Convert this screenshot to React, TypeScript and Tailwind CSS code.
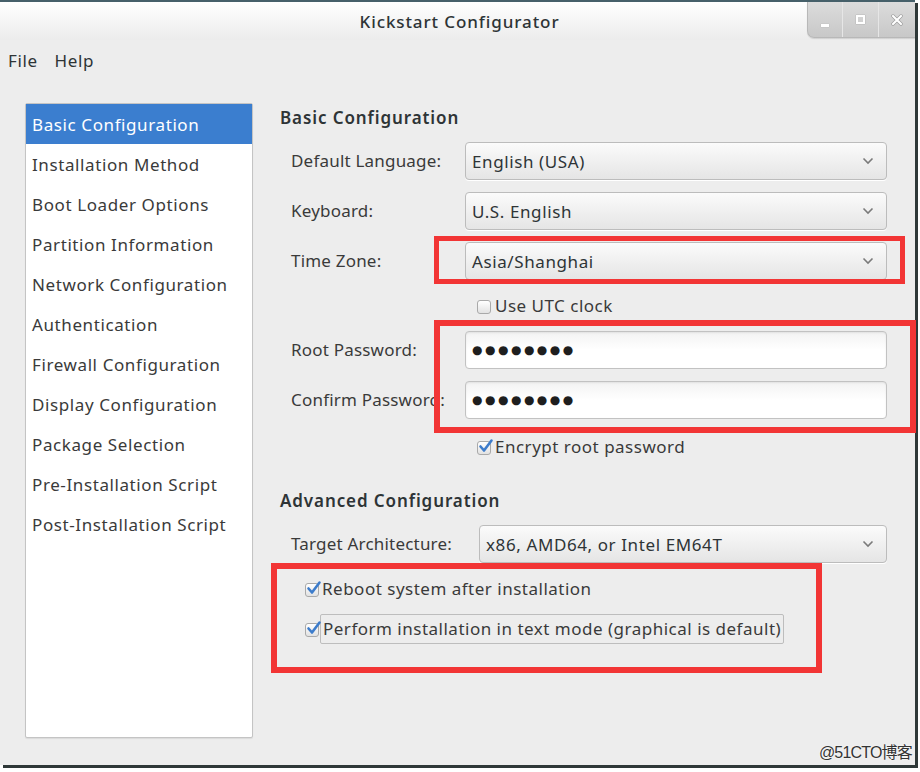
import React from "react";

const FONT = "font-['Noto_Sans','DejaVu_Sans',sans-serif]";

function Chevron() {
  return (
    <svg width="12" height="8" viewBox="0 0 12 8" className="shrink-0">
      <polyline points="1.5,1.5 6,6 10.5,1.5" fill="none" stroke="#7a7a7a" strokeWidth="1.6" />
    </svg>
  );
}

function Combo({ text, cls }: { text: string; cls: string }) {
  return (
    <div
      className={`h-[38px] ${cls} rounded-[4px] border border-[#bcbcbc] bg-gradient-to-b from-[#fbfbfb] to-[#e5e5e5] flex items-center justify-between pl-[6px] pr-[12px] shadow-[0_1px_0_#ffffff]`}
    >
      <span className="text-[17px] text-[#2e3436] leading-none tracking-[0.6px]">{text}</span>
      <Chevron />
    </div>
  );
}

function Entry() {
  return (
    <div className="h-[38px] w-[422px] rounded-[4px] border border-[#c2c2c2] bg-gradient-to-b from-[#f3f3f3] via-[#ffffff] to-[#ffffff] flex items-center pl-[6px] shadow-[inset_0_1px_2px_rgba(0,0,0,0.08)]">
      <span className="font-['DejaVu_Sans',sans-serif] text-[12px] tracking-[2.5px] text-[#1e1e1e] leading-none">
        ●●●●●●●●
      </span>
    </div>
  );
}

function Check({ checked }: { checked: boolean }) {
  return (
    <div className="relative w-[15px] h-[15px] shrink-0">
      <div className="absolute left-0 top-[1px] w-[14px] h-[14px] rounded-[3px] border border-[#a9a9a9] bg-gradient-to-b from-[#ffffff] to-[#e2e2e2]" />
      {checked && (
        <svg width="16" height="16" viewBox="0 0 16 16" className="absolute left-[1px] -top-[2px]">
          <path d="M2.5 8.5 L6 12.5 L13.5 2.5" fill="none" stroke="#3d7ccb" strokeWidth="2.6" strokeLinecap="round" strokeLinejoin="round" />
        </svg>
      )}
    </div>
  );
}

const sideItems = [
  "Basic Configuration",
  "Installation Method",
  "Boot Loader Options",
  "Partition Information",
  "Network Configuration",
  "Authentication",
  "Firewall Configuration",
  "Display Configuration",
  "Package Selection",
  "Pre-Installation Script",
  "Post-Installation Script",
];

export default function App() {
  return (
    <div className={`relative w-[920px] h-[772px] bg-white overflow-hidden ${FONT}`}>
      <div className="w-[915px] h-[765px] bg-[#ededed] border-t-2 border-[#46606a] shadow-[3px_3px_0_#2f3838] flex flex-col">
        {/* Title bar */}
        <div className="h-[38px] grid grid-cols-[1fr_auto_1fr] bg-gradient-to-b from-[#ffffff] to-[#ececec]">
          <div />
          <div className="flex items-center justify-center pl-[4px]">
            <span className="text-[17px] font-medium tracking-[0.9px] text-[#2e3436] leading-none">Kickstart Configurator</span>
          </div>
          <div className="flex justify-end">
            <div className="flex h-[36px] rounded-bl-[7px] bg-gradient-to-b from-[#dcdcdc] to-[#c8c8c8] border-l border-b border-[#b8b8b8] shadow-[0_1px_1px_rgba(0,0,0,0.12)]">
              <div className="w-[35px] flex items-end justify-center pb-[10px] border-r border-[#e6e6e6]">
                <div className="w-[8px] h-[3px] bg-white shadow-[0_0_1px_#8a8a8a]" />
              </div>
              <div className="w-[36px] flex items-center justify-center border-r border-[#e6e6e6]">
                <div className="w-[9px] h-[9px] border-[2px] border-white shadow-[0_0_1px_#8a8a8a]" />
              </div>
              <div className="w-[36px] flex items-center justify-center">
                <svg width="12" height="12" viewBox="0 0 12 12">
                  <path d="M2 2 L10 10 M10 2 L2 10" stroke="#9a9a9a" strokeWidth="3.4" strokeLinecap="round" />
                  <path d="M2 2 L10 10 M10 2 L2 10" stroke="#ffffff" strokeWidth="2.2" strokeLinecap="round" />
                </svg>
              </div>
            </div>
          </div>
        </div>

        {/* Menu bar */}
        <div className="h-[42px] flex items-center gap-[17px] px-[8px] text-[17px] tracking-[0.6px] text-[#2e3436]">
          <span>File</span>
          <span>Help</span>
        </div>

        {/* Content */}
        <div className="flex pl-[25px] pt-[21px]">
          {/* Sidebar */}
          <div className="w-[228px] h-[635px] bg-white border border-[#c4c4c4] rounded-[2px] shadow-[0_1px_1px_rgba(0,0,0,0.08)] flex flex-col">
            {sideItems.map((s, i) => (
              <div
                key={s}
                className={
                  i === 0
                    ? "h-[40px] flex items-center px-[6px] pt-[1px] bg-[#3b7ecf] text-white text-[17px] tracking-[0.6px]"
                    : "h-[40px] flex items-center px-[6px] pt-[1px] text-[#3a3a3a] text-[17px] tracking-[0.6px]"
                }
              >
                {s}
              </div>
            ))}
          </div>

          {/* Right panel */}
          <div className="ml-[27px] w-[620px] flex flex-col text-[17px] tracking-[0.5px] text-[#3a3a3a]">
            <div className="h-[30px] flex items-center font-semibold tracking-[0.9px] text-[#2e3436]">Basic Configuration</div>

            <div className="mt-[9px] flex flex-col gap-[12px]">
              <div className="flex items-center">
                <div className="w-[185px] pl-[11px] tracking-[0.2px]">Default Language:</div>
                <Combo text="English (USA)" cls="w-[422px]" />
              </div>
              <div className="flex items-center">
                <div className="w-[185px] pl-[11px] tracking-[0.2px]">Keyboard:</div>
                <Combo text="U.S. English" cls="w-[422px]" />
              </div>
              <div className="flex items-center">
                <div className="w-[185px] pl-[11px] tracking-[0.2px]">Time Zone:</div>
                <Combo text="Asia/Shanghai" cls="w-[422px]" />
              </div>
            </div>

            <div className="mt-[14px] h-[24px] flex items-center gap-[3px] pl-[197px]">
              <Check checked={false} />
              <span>Use UTC clock</span>
            </div>

            <div className="mt-[13px] flex flex-col gap-[12px]">
              <div className="flex items-center">
                <div className="w-[185px] pl-[11px] tracking-[0.2px]">Root Password:</div>
                <Entry />
              </div>
              <div className="flex items-center">
                <div className="w-[185px] pl-[11px] tracking-[0.2px] whitespace-nowrap">Confirm Password:</div>
                <Entry />
              </div>
            </div>

            <div className="mt-[16px] h-[24px] flex items-center gap-[3px] pl-[197px]">
              <Check checked={true} />
              <span>Encrypt root password</span>
            </div>

            <div className="mt-[27px] h-[30px] flex items-center font-semibold tracking-[0.9px] text-[#2e3436]">Advanced Configuration</div>

            <div className="mt-[9px] flex items-center">
              <div className="w-[199px] pl-[11px] tracking-[0.2px]">Target Architecture:</div>
              <Combo text="x86, AMD64, or Intel EM64T" cls="w-[408px]" />
            </div>

            <div className="mt-[14px] h-[24px] flex items-center gap-[2px] pl-[25px]">
              <Check checked={true} />
              <span>Reboot system after installation</span>
            </div>

            <div className="mt-[13px] h-[30px] flex items-center gap-[0px] pl-[25px]">
              <Check checked={true} />
              <span className="h-[30px] flex items-center px-[2px] border border-[#bdbdbd] rounded-[2px] whitespace-nowrap">
                Perform installation in text mode (graphical is default)
              </span>
            </div>
          </div>
        </div>
      </div>

      {/* Red annotation boxes */}
      <div className="absolute left-[434px] top-[236px] w-[471px] h-[48px] border-[5px] border-[#f23535]" />
      <div className="absolute left-[434px] top-[320px] w-[482px] h-[113px] border-[6px] border-[#f23535]" />
      <div className="absolute left-[271px] top-[563px] w-[551px] h-[110px] border-[6px] border-[#f23535]" />

      {/* Watermark */}
      <div className="absolute right-[8px] bottom-[7px] text-[16px] text-[#333] font-['Liberation_Sans','Noto_Sans_CJK_SC',sans-serif] tracking-[-0.8px] [text-shadow:0_0_2px_#fff]">
        @51CTO博客
      </div>
    </div>
  );
}
